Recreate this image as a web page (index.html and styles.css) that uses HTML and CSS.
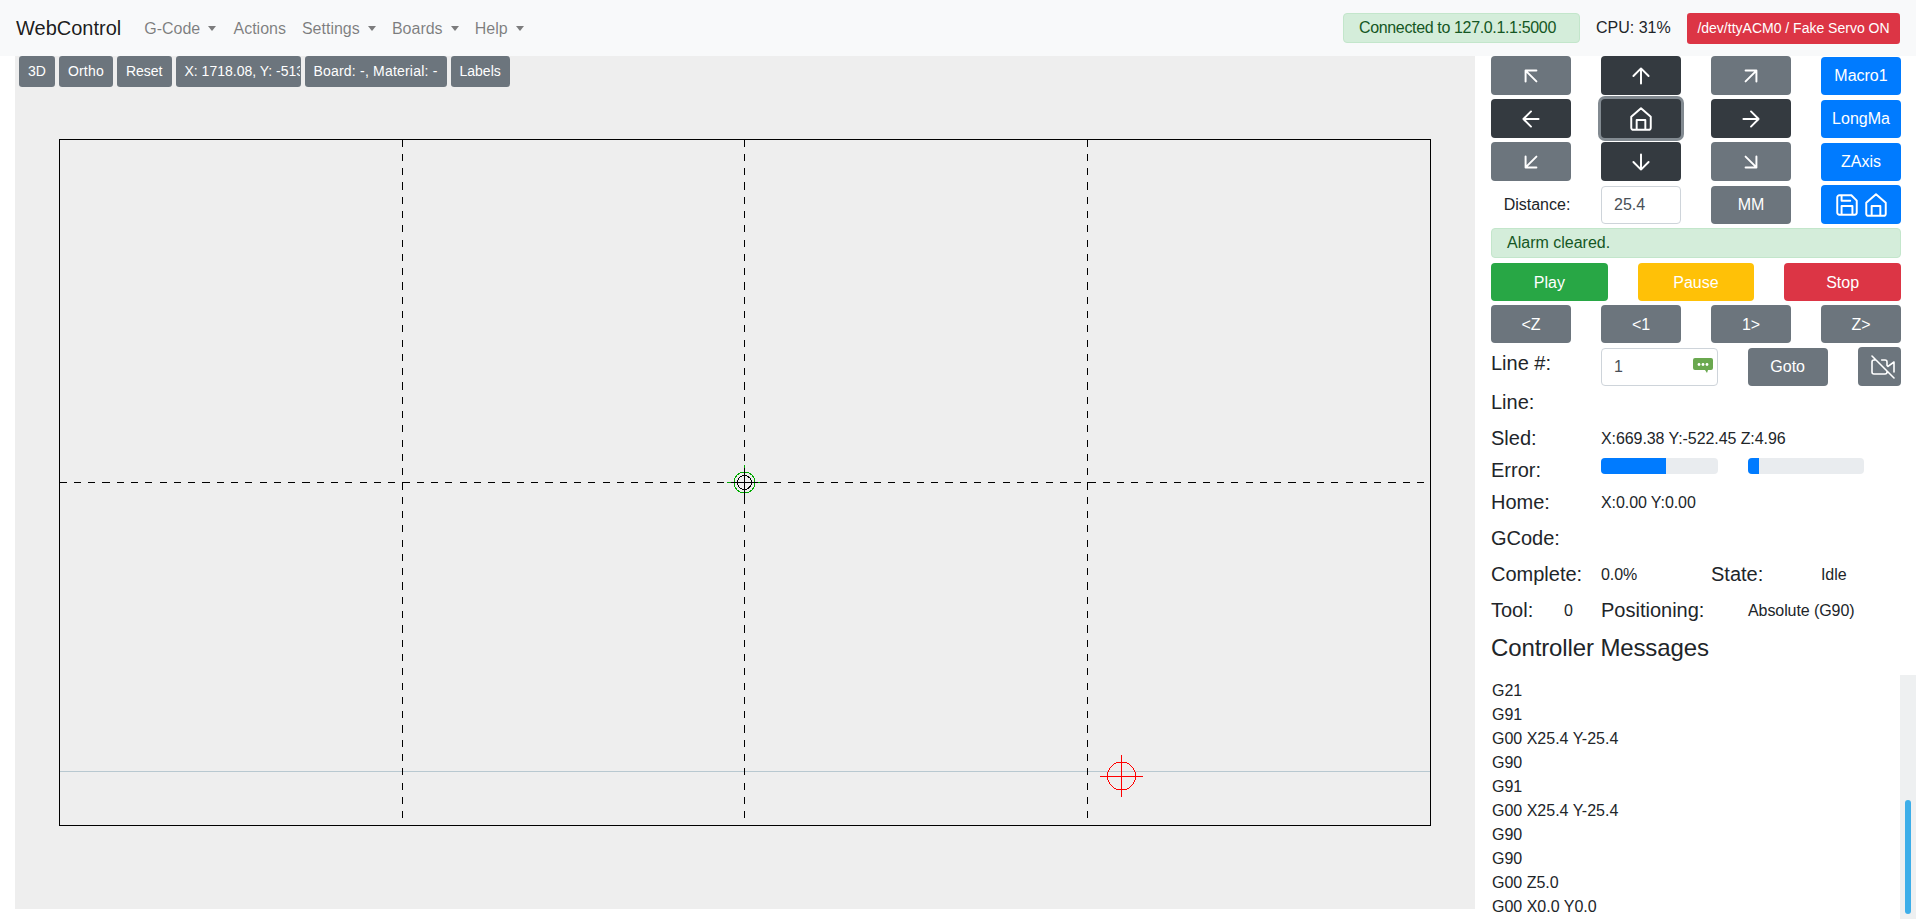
FILE: index.html
```html
<!DOCTYPE html>
<html lang="en">
<head>
<meta charset="utf-8">
<title>WebControl</title>
<link rel="stylesheet" href="styles.css">
</head>
<body>
<nav class="navbar">
  <a class="brand">WebControl</a>
  <ul class="nav-links">
    <li class="nav-link caret">G-Code</li>
    <li class="nav-link">Actions</li>
    <li class="nav-link caret">Settings</li>
    <li class="nav-link caret">Boards</li>
    <li class="nav-link caret">Help</li>
  </ul>
  <div class="nav-status">
    <div class="conn-alert">Connected to 127.0.1.1:5000</div>
    <div class="cpu">CPU: 31%</div>
    <button class="btn btn-sm btn-danger port-btn">/dev/ttyACM0 / Fake Servo ON</button>
  </div>
</nav>
<main class="layout">
  <section class="board-panel">
    <div class="board-toolbar">
      <button class="btn btn-sm btn-secondary">3D</button>
      <button class="btn btn-sm btn-secondary wide-1">Ortho</button>
      <button class="btn btn-sm btn-secondary">Reset</button>
      <button class="btn btn-sm btn-secondary pos-btn">X: 1718.08, Y: -513.22</button>
      <button class="btn btn-sm btn-secondary wide-2">Board: -, Material: -</button>
      <button class="btn btn-sm btn-secondary">Labels</button>
    </div>
    <svg class="board-svg" width="1460" height="853" viewBox="15 56 1460 853" shape-rendering="crispEdges">
      <rect x="59.5" y="139.5" width="1371" height="686" fill="none" stroke="#000"/>
      <line x1="60" y1="771.5" x2="1430" y2="771.5" class="guide"/>
      <g fill="none" stroke="#0a0">
        <circle cx="744.5" cy="482.5" r="10.500"/>
        <line x1="744.500" y1="465" x2="744.500" y2="500"/>
        <line x1="727" y1="482.500" x2="762" y2="482.500"/>
      </g>
      <g fill="none" stroke="#000">
        <circle cx="744.5" cy="482.5" r="7"/>
        <line x1="744.500" y1="470" x2="744.500" y2="497"/>
        <line x1="731" y1="482.500" x2="758" y2="482.500"/>
      </g>
      <line x1="402.5" y1="139.500" x2="402.5" y2="819" class="dash"/>
      <line x1="744.5" y1="139.500" x2="744.5" y2="819" class="dash"/>
      <line x1="1087.5" y1="139.500" x2="1087.5" y2="819" class="dash"/>
      <line x1="59.500" y1="482.5" x2="1424" y2="482.5" class="dash"/>
      <g fill="none" stroke="#f00">
        <circle cx="1121.5" cy="776" r="14"/>
        <line x1="1121.500" y1="755" x2="1121.500" y2="797"/>
        <line x1="1100" y1="776.500" x2="1143" y2="776.500"/>
      </g>
    </svg>
  </section>
  <aside class="side">
    <div class="grid4">
      <button class="btn btn-secondary"><svg class="ico" viewBox="0 0 24 24"><path d="M17 17 7 7M7 17V7h10"/></svg></button>
      <button class="btn btn-dark"><svg class="ico" viewBox="0 0 24 24"><path d="M12 19V5M5 12l7-7 7 7"/></svg></button>
      <button class="btn btn-secondary"><svg class="ico" viewBox="0 0 24 24"><path d="M7 17 17 7M7 7h10v10"/></svg></button>
      <button class="btn btn-primary inset">Macro1</button>
      <button class="btn btn-dark"><svg class="ico" viewBox="0 0 24 24"><path d="M19 12H5M12 19l-7-7 7-7"/></svg></button>
      <button class="btn btn-dark focused"><svg class="ico" viewBox="0 0 24 24"><path d="M3 10l9-8 9 8v10a2 2 0 0 1-2 2H5a2 2 0 0 1-2-2zM8 22v-9h8v9"/></svg></button>
      <button class="btn btn-dark"><svg class="ico" viewBox="0 0 24 24"><path d="M5 12h14M12 5l7 7-7 7"/></svg></button>
      <button class="btn btn-primary inset">LongMa</button>
      <button class="btn btn-secondary"><svg class="ico" viewBox="0 0 24 24"><path d="M17 7 7 17M17 17H7V7"/></svg></button>
      <button class="btn btn-dark"><svg class="ico" viewBox="0 0 24 24"><path d="M12 5v14M19 12l-7 7-7-7"/></svg></button>
      <button class="btn btn-secondary"><svg class="ico" viewBox="0 0 24 24"><path d="M7 7l10 10M17 7v10H7"/></svg></button>
      <button class="btn btn-primary inset">ZAxis</button>
      <div class="dist-label">Distance:</div>
      <input class="field inset" value="25.4">
      <button class="btn btn-secondary inset">MM</button>
      <button class="btn btn-primary icons-btn">
        <svg class="ico" viewBox="0 0 24 24"><path d="M19 21H5a2 2 0 0 1-2-2V5a2 2 0 0 1 2-2h11l5 5v11a2 2 0 0 1-2 2zM17 21v-8H7v8M7 3v5h8"/></svg>
        <svg class="ico" viewBox="0 0 24 24"><path d="M3 10l9-8 9 8v10a2 2 0 0 1-2 2H5a2 2 0 0 1-2-2zM8 22v-9h8v9"/></svg>
      </button>
    </div>
    <div class="status-alert">Alarm cleared.</div>
    <div class="grid3">
      <button class="btn btn-success">Play</button>
      <button class="btn btn-warning">Pause</button>
      <button class="btn btn-danger">Stop</button>
    </div>
    <div class="grid4 step-row">
      <button class="btn btn-secondary">&lt;Z</button>
      <button class="btn btn-secondary">&lt;1</button>
      <button class="btn btn-secondary">1&gt;</button>
      <button class="btn btn-secondary">Z&gt;</button>
    </div>
    <div class="line-row">
      <h5 class="lbl l-linenum">Line #:</h5>
      <div class="line-input">
        <input class="field" value="1">
        <svg class="lp-badge" viewBox="0 0 20 16"><path d="M2 0h16a2 2 0 0 1 2 2v8a2 2 0 0 1-2 2h-3l-1 3-2-3H2a2 2 0 0 1-2-2V2a2 2 0 0 1 2-2z" fill="#6aa84f"/><circle cx="6" cy="6.500" r="1.400" fill="#fff"/><circle cx="10" cy="6.500" r="1.400" fill="#fff"/><circle cx="14" cy="6.500" r="1.400" fill="#fff"/></svg>
      </div>
      <button class="btn btn-secondary goto-btn">Goto</button>
      <button class="btn btn-secondary cam-btn"><svg class="ico cam-ico" viewBox="0 0 24 24"><path d="M16 16v1a2 2 0 0 1-2 2H3a2 2 0 0 1-2-2V7a2 2 0 0 1 2-2h2m5.660 0H14a2 2 0 0 1 2 2v3.340l1 1L23 7v10M1 1l22 22"/></svg></button>
    </div>
    <div class="info-row r-line"><h5 class="lbl">Line:</h5></div>
    <div class="info-row r-sled"><h5 class="lbl">Sled:</h5><span class="val">X:669.38 Y:-522.45 Z:4.96</span></div>
    <div class="info-row r-err"><h5 class="lbl">Error:</h5>
      <div class="progress p1"><div class="bar" style="width:55.5%"></div></div>
      <div class="progress p2"><div class="bar" style="width:9.5%"></div></div>
    </div>
    <div class="info-row r-home"><h5 class="lbl">Home:</h5><span class="val">X:0.00 Y:0.00</span></div>
    <div class="info-row r-gcode"><h5 class="lbl">GCode:</h5></div>
    <div class="info-row r-comp"><h5 class="lbl">Complete:</h5><span class="val">0.0%</span><h5 class="lbl">State:</h5><span class="val">Idle</span></div>
    <div class="info-row r-tool"><h5 class="lbl l-tool">Tool:</h5><span class="val v-tool">0</span><h5 class="lbl l-pos">Positioning:</h5><span class="val">Absolute (G90)</span></div>
    <h4 class="msg-title">Controller Messages</h4>
    <div class="messages">
      <div>G21</div><div>G91</div><div>G00 X25.4 Y-25.4</div><div>G90</div><div>G91</div>
      <div>G00 X25.4 Y-25.4</div><div>G90</div><div>G90</div><div>G00 Z5.0</div><div>G00 X0.0 Y0.0</div>
      <div class="scroll-track"><div class="scroll-thumb"></div></div>
    </div>
  </aside>
</main>
</body>
</html>
```
FILE: styles.css
```css
* { box-sizing: border-box; }
html, body { margin: 0; padding: 0; height: 100%; overflow: hidden; }
body { font-family: "Liberation Sans", Arial, sans-serif; font-size: 16px; line-height: 1.5; color: #212529; background: #fff; }
.navbar { display: flex; align-items: center; height: 56px; padding: 0 16px; background: #f8f9fa; position: relative; z-index: 1; }
.brand { font-size: 20px; line-height: 30px; color: rgba(0,0,0,.9); margin-right: 15px; }
.nav-links { display: flex; list-style: none; margin: 0; padding: 1px 0 0; }
.nav-link { padding: 8px; color: rgba(0,0,0,.5); }
.nav-link:first-child { padding-right: 9px; }
.caret::after { content: ""; display: inline-block; margin-left: 8.200px; vertical-align: 3px; border-top: 5px solid; border-left: 4.800px solid transparent; border-right: 4.800px solid transparent; }
.nav-status { margin-left: auto; display: flex; align-items: center; }
.conn-alert { width: 237px; height: 30px; padding: 0 15px; line-height: 28px; color: #155724; background: #d4edda; border: 1px solid #c3e6cb; border-radius: 4px; white-space: nowrap; letter-spacing: -.35px; }
.cpu { margin-left: 16px; width: 91px; white-space: nowrap; }
.btn { display: inline-block; border: 1px solid transparent; border-radius: 4px; padding: 6px 12px; font: inherit; line-height: 24px; height: 38px; color: #fff; text-align: center; white-space: nowrap; }
.btn-sm { font-size: 14px; line-height: 21px; height: 31px; padding: 4px 8px; border-radius: 3.200px; }
.btn-secondary { background: #6c757d; }
.btn-dark { background: #343a40; }
.btn-primary { background: #007bff; }
.btn-success { background: #28a745; }
.btn-warning { background: #ffc107; }
.btn-danger { background: #dc3545; }
.port-btn { width: 213px; padding: 4px 0; }
.layout { display: flex; height: 863px; }
.board-panel { position: relative; width: 1460px; height: 853px; margin: 0 1px 0 15px; background: #eee; flex: none; }
.board-toolbar { position: absolute; left: 4px; top: 0; display: flex; gap: 4px; }
.board-toolbar .btn { flex: none; }
.wide-1 { letter-spacing: .2px; }
.wide-2 { letter-spacing: .2px; }
.pos-btn { width: 125px; text-align: left; overflow: hidden; padding-left: 8px; }
.board-svg { display: block; }
.dash { stroke: #000; stroke-dasharray: 7.145 7.145; }
.guide { stroke: #b8c8d0; }
.side { width: 440px; flex: none; padding: 0 15px; position: relative; }
.grid4 { display: grid; grid-template-columns: repeat(4, 80px); column-gap: 30px; row-gap: 4px; }
.grid4 > .btn { display: flex; align-items: center; justify-content: center; height: 39px; padding: 0; }
.grid4 > .inset { height: 38px; margin-top: 1px; }
.ico { width: 26px; height: 26px; fill: none; stroke: #fff; stroke-width: 1.800; stroke-linecap: round; stroke-linejoin: round; flex: none; }
.focused { box-shadow: 0 0 0 3px #828a91; }
.dist-label { text-align: center; line-height: 39px; padding-left: 12px; white-space: nowrap; }
.field { display: block; width: 100%; height: 38px; padding: 0 12px; font: inherit; color: #495057; background: #fff; border: 1px solid #ced4da; border-radius: 4px; }
.icons-btn { gap: 3px; }
.status-alert { margin-top: 4px; height: 30px; line-height: 28px; padding-left: 15px; color: #155724; background: #d4edda; border: 1px solid #c3e6cb; border-radius: 4px; }
.grid3 { display: grid; grid-template-columns: repeat(3, 1fr); column-gap: 30px; margin-top: 5px; }
.grid3 > .btn { padding: 1px 0 0; }
.step-row { margin-top: 4px; }
.grid4.step-row > .btn { height: 38px; padding-top: 1px; }
.line-row { display: grid; grid-template-columns: 80px 116.670px 80px 43.330px; column-gap: 30px; align-items: start; margin-top: 4px; width: 410px; }
.lbl { margin: 0; font-size: 20px; line-height: 24px; font-weight: 400; white-space: nowrap; }
.l-linenum { margin-top: 4px; }
.line-input { position: relative; margin-top: 1px; }
.goto-btn { margin-top: 1px; padding: 0; }
.cam-btn { display: flex; align-items: center; height: 39px; padding: 0 0 0 12px; overflow: hidden; }
.cam-ico { width: 24px; height: 24px; stroke-width: 1.600; }
.lp-badge { position: absolute; top: 10px; right: 5px; width: 20px; height: 16px; }
.info-row { display: grid; grid-template-columns: repeat(4, 80px); column-gap: 30px; align-items: center; height: 24px; }
.r-line { margin-top: 4px; }
.r-sled { margin-top: 12px; }
.r-err { display: flex; margin-top: 8px; align-items: flex-start; }
.r-err .lbl { width: 80px; flex: none; }
.progress { height: 16px; border-radius: 4px; background: #e9ecef; overflow: hidden; width: 117px; flex: none; }
.p2 { width: 116px; }
.bar { height: 100%; background: #007bff; }
.r-home { margin-top: 8px; }
.r-gcode { margin-top: 12px; }
.r-comp { margin-top: 12px; }
.r-tool { margin-top: 12px; display: flex; column-gap: 0; }
.val { white-space: nowrap; font-size: 16px; line-height: 22px; padding-top: 2px; letter-spacing: -.08px; }
.l-tool { width: 73px; }
.v-tool { width: 37px; }
.l-pos { width: 147px; }
.msg-title { margin: 11px 0 0; font-size: 24px; line-height: 29px; font-weight: 400; letter-spacing: -.12px; }
.messages { position: absolute; left: 0; right: 0; top: 619px; height: 250px; padding: 4px 15px 0 16px; }
.messages > div:not(.scroll-track) { height: 24px; line-height: 24px; }
.scroll-track { position: absolute; right: 0; top: 0; width: 16px; height: 244px; background: #eef0f1; }
.scroll-thumb { position: absolute; left: 5px; top: 125px; width: 6px; height: 114px; border-radius: 3px; background: #3daee9; }
```
